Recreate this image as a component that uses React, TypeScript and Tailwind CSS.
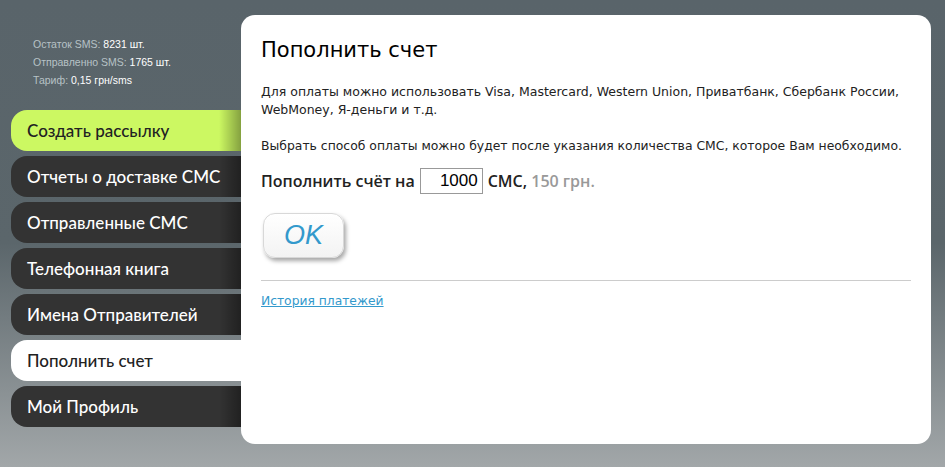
const menu = [
  { label: "Создать рассылку", kind: "green" },
  { label: "Отчеты о доставке СМС", kind: "dark" },
  { label: "Отправленные СМС", kind: "dark" },
  { label: "Телефонная книга", kind: "dark" },
  { label: "Имена Отправителей", kind: "dark" },
  { label: "Пополнить счет", kind: "active" },
  { label: "Мой Профиль", kind: "dark" },
];

const MenuItem = ({ label, kind }: { label: string; kind: string }) => {
  const base =
    "relative flex h-[41px] items-center rounded-l-[16px] pl-4 text-[17px] font-[Lato,sans-serif] font-medium";
  const tone =
    kind === "green"
      ? "bg-[#ccf862] text-[#222]"
      : kind === "active"
      ? "bg-white text-[#222]"
      : "bg-[#333333] text-white";
  return (
    <div className={`${base} ${tone}`}>
      <span>{label}</span>
      {kind !== "active" && (
        <div className="absolute right-0 top-0 h-full w-[22px] bg-gradient-to-r from-transparent to-black/35" />
      )}
    </div>
  );
};

export default function App() {
  return (
    <div className="flex h-[467px] w-[945px] bg-[linear-gradient(to_bottom,#59646a_0%,#5b666b_52%,#a2a7a9_100%)] font-['DejaVu_Sans',sans-serif]">
      <aside className="flex w-[241px] shrink-0 flex-col pl-[11px]">
        <div className="pl-[22px] pt-[35px] font-['Liberation_Sans',sans-serif] text-[10.5px] leading-[18px] text-[#b7c2c6]">
          <div>
            Остаток SMS: <span className="text-white">8231 шт.</span>
          </div>
          <div>
            Отправленно SMS: <span className="text-white">1765 шт.</span>
          </div>
          <div>
            Тариф: <span className="text-white">0,15 грн/sms</span>
          </div>
        </div>
        <nav className="mt-[21px] flex flex-col gap-[5px]">
          {menu.map((m) => (
            <MenuItem key={m.label} label={m.label} kind={m.kind} />
          ))}
        </nav>
      </aside>

      <main className="mt-[15px] h-[429px] w-[690px] rounded-[14px] bg-white px-5 pt-[22px]">
        <h1 className="text-[21px] leading-[26px] text-black">Пополнить счет</h1>
        <p className="mt-[20px] text-[12.5px] leading-[18px] text-[#222]">
          Для оплаты можно использовать Visa, Mastercard, Western Union, Приватбанк, Сбербанк России,
          WebMoney, Я-деньги и т.д.
        </p>
        <p className="mt-[18px] text-[12.4px] leading-[18px] text-[#222]">
          Выбрать способ оплаты можно будет после указания количества СМС, которое Вам необходимо.
        </p>
        <div className="mt-[13px] flex items-center gap-[5px] font-['Open_Sans',sans-serif] text-[16px] font-semibold text-[#222]">
          <span>Пополнить счёт на</span>
          <input
            defaultValue="1000"
            className="h-[26px] w-[63px] border border-[#999] px-1 text-right font-['Liberation_Sans',sans-serif] text-[17px] font-normal text-black outline-none"
          />
          <span>
            СМС, <span className="text-[#999]">150 грн.</span>
          </span>
        </div>
        <button
          type="button"
          className="ml-[2px] mt-[19px] h-[45px] w-[81px] rounded-[12px] border border-[#d8d8d8] bg-gradient-to-b from-white to-[#f3f3f3] font-['Liberation_Sans',sans-serif] text-[27px] italic text-[#3399cc] shadow-[2px_3px_4px_rgba(0,0,0,0.35)]"
        >
          OK
        </button>
        <div className="mt-[22px] border-t border-[#cccccc]" />
        <a href="#" className="mt-[11px] inline-block text-[12.3px] leading-[18px] text-[#3399cc] underline">
          История платежей
        </a>
      </main>
    </div>
  );
}
